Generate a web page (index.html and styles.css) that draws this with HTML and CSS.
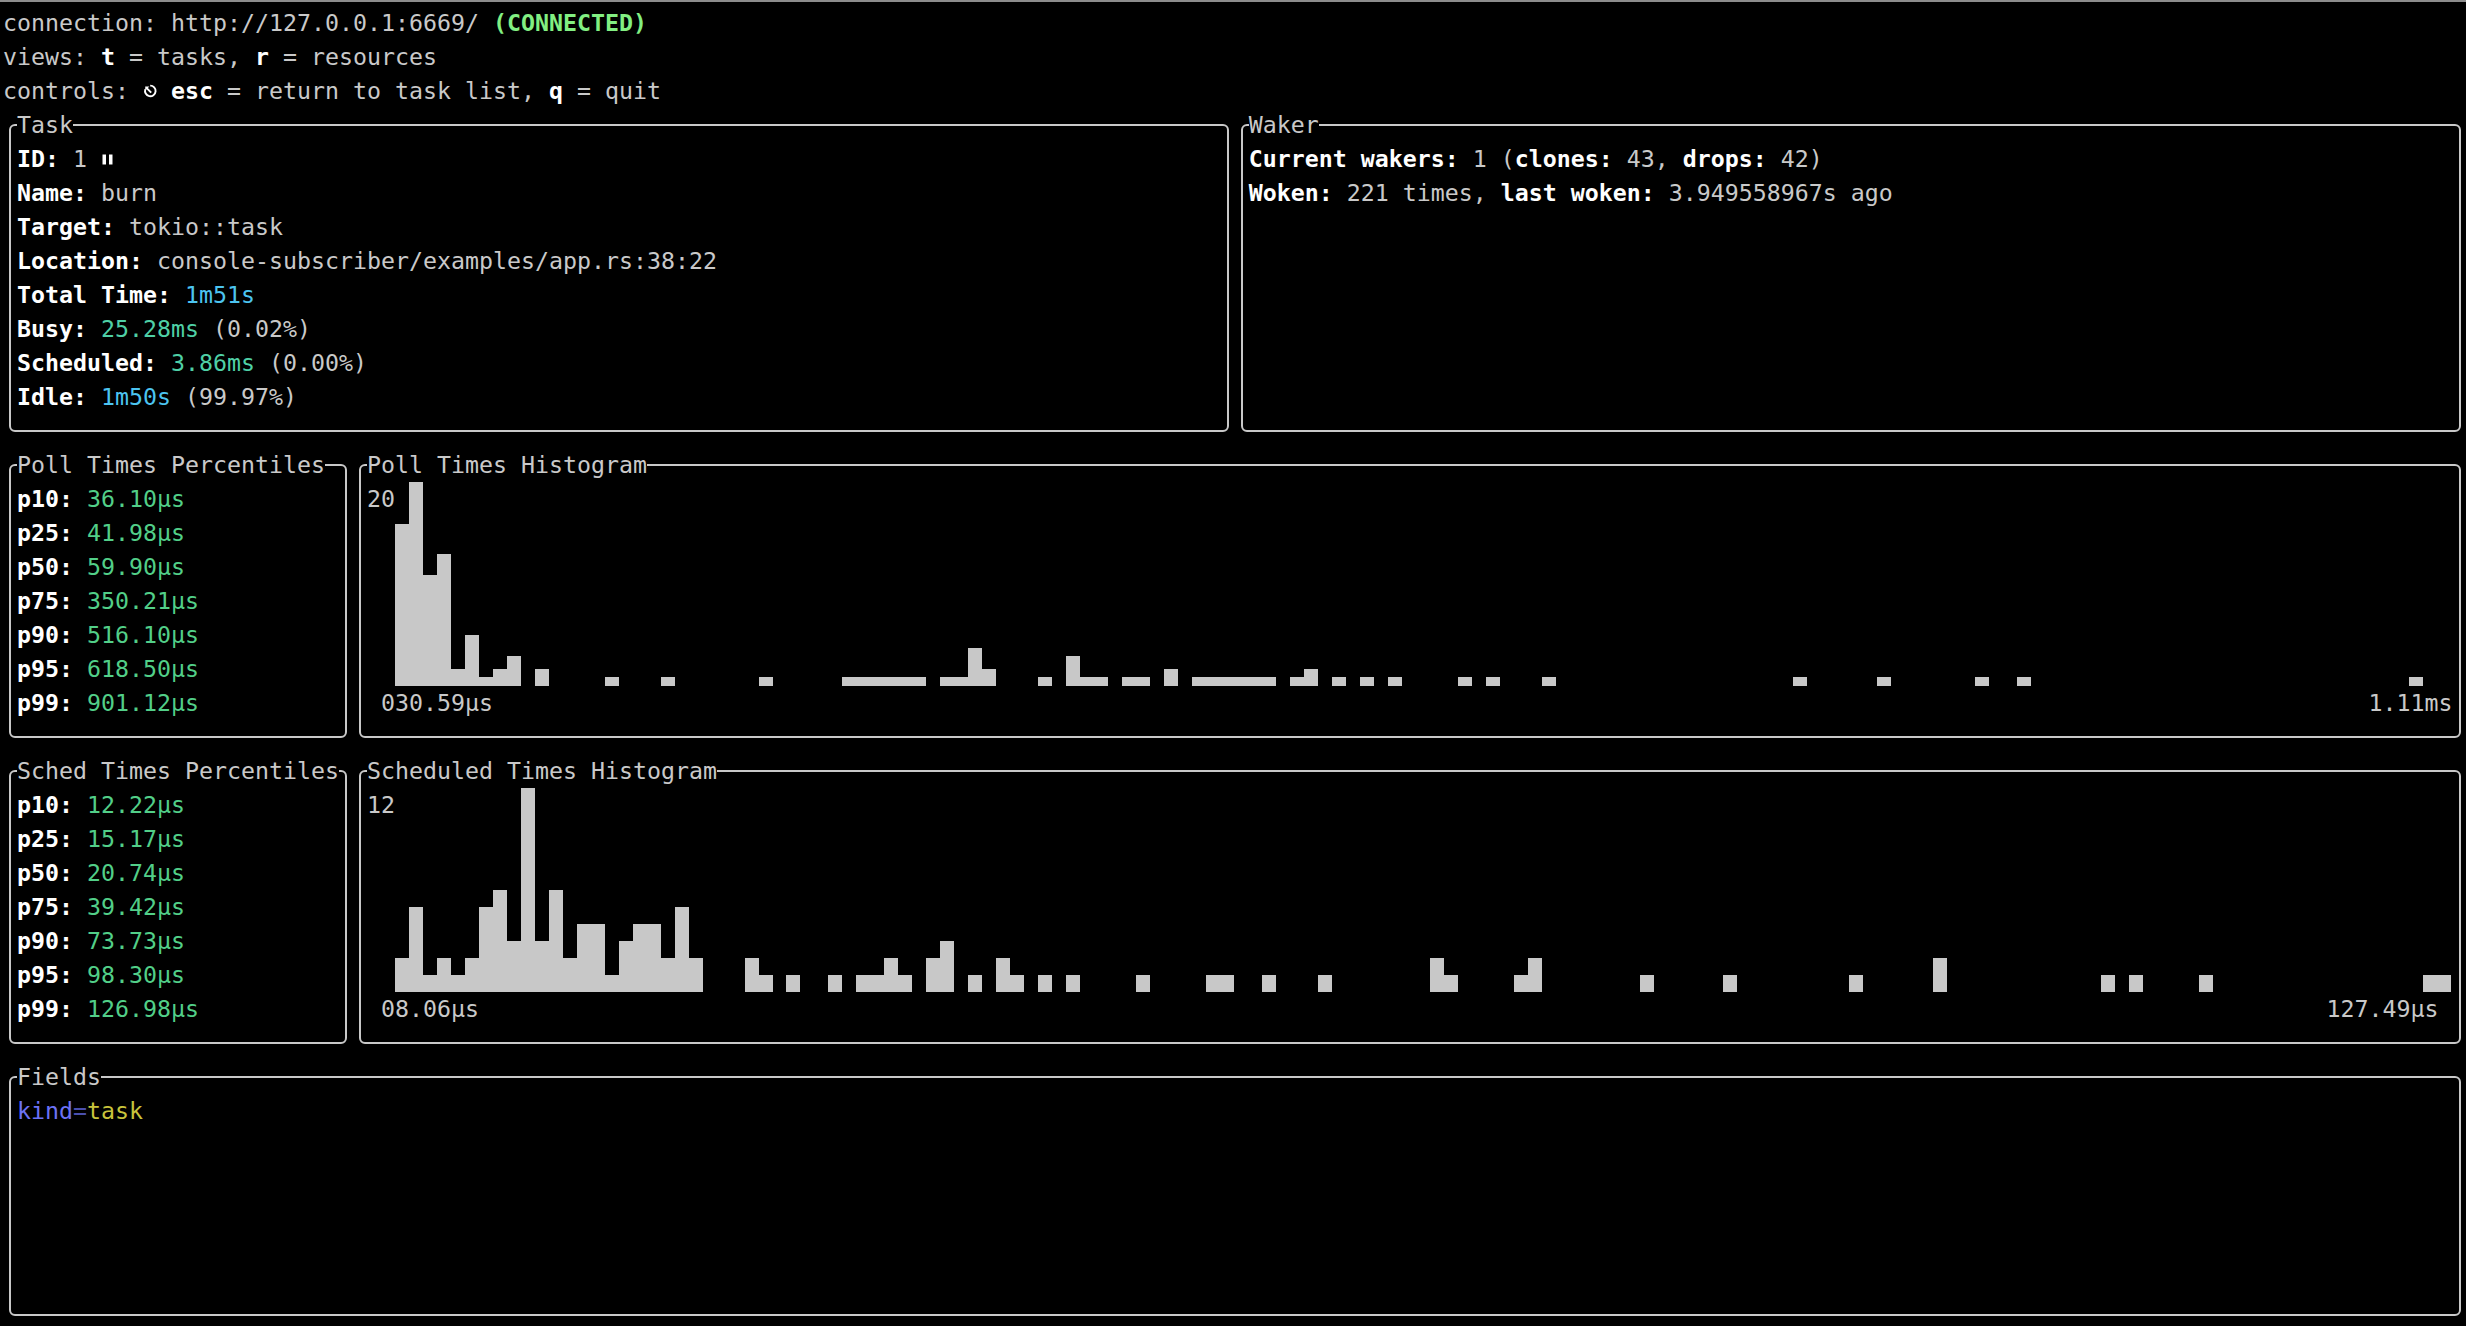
FILE: index.html
```html
<!DOCTYPE html>
<html lang="en">
<head>
<meta charset="utf-8">
<title>tokio-console — task</title>
<link rel="stylesheet" href="styles.css">
</head>
<body>
<div class="term">
  <div class="line">connection: http://127.0.0.1:6669/ <span class="ok">(CONNECTED)</span></div>
  <div class="line">views: <b>t</b> = tasks, <b>r</b> = resources</div>
  <div class="line">controls: <svg class="ico" viewBox="0 0 14 34" aria-label="esc"><path d="M7.2 11.6 A5.3 5.3 0 1 1 2.3 15.2" fill="none" stroke="#fff" stroke-width="1.9"/><path d="M8.2 18.6 L3.2 13.6" stroke="#fff" stroke-width="1.9" fill="none"/><path d="M2.2 12.4 L6.4 12.6 L2.4 16.6 Z" fill="#fff"/></svg> <b>esc</b> = return to task list, <b>q</b> = quit</div>

  <div class="row row-top">
    <fieldset class="panel">
      <legend>Task</legend>
      <div class="line"><b>ID:</b> 1 <svg class="ico" viewBox="0 0 14 34" aria-label="idle"><rect x="1.5" y="12.5" width="3.5" height="10" fill="#fff"/><rect x="8" y="12.5" width="3.5" height="10" fill="#fff"/></svg></div>
      <div class="line"><b>Name:</b> burn</div>
      <div class="line"><b>Target:</b> tokio::task</div>
      <div class="line"><b>Location:</b> console-subscriber/examples/app.rs:38:22</div>
      <div class="line"><b>Total Time:</b> <span class="cyan">1m51s</span></div>
      <div class="line"><b>Busy:</b> <span class="teal">25.28ms</span> (0.02%)</div>
      <div class="line"><b>Scheduled:</b> <span class="teal">3.86ms</span> (0.00%)</div>
      <div class="line"><b>Idle:</b> <span class="cyan">1m50s</span> (99.97%)</div>
    </fieldset>
    <fieldset class="panel">
      <legend>Waker</legend>
      <div class="line"><b>Current wakers:</b> 1 (<b>clones:</b> 43, <b>drops:</b> 42)</div>
      <div class="line"><b>Woken:</b> 221 times, <b>last woken:</b> 3.949558967s ago</div>
    </fieldset>
  </div>

  <div class="row row-mid">
    <fieldset class="panel">
      <legend>Poll Times Percentiles</legend>
      <div class="line"><b>p10:</b> <span class="green">36.10μs</span></div>
      <div class="line"><b>p25:</b> <span class="green">41.98μs</span></div>
      <div class="line"><b>p50:</b> <span class="green">59.90μs</span></div>
      <div class="line"><b>p75:</b> <span class="green">350.21μs</span></div>
      <div class="line"><b>p90:</b> <span class="green">516.10μs</span></div>
      <div class="line"><b>p95:</b> <span class="green">618.50μs</span></div>
      <div class="line"><b>p99:</b> <span class="green">901.12μs</span></div>
    </fieldset>
    <fieldset class="panel">
      <legend>Poll Times Histogram</legend>
      <div class="chart">
        <div class="ymax">20</div>
        <div class="bars" id="poll-bars"></div>
      </div>
      <div class="xaxis"><span> 030.59μs</span><span>1.11ms</span></div>
    </fieldset>
  </div>

  <div class="row row-mid">
    <fieldset class="panel">
      <legend>Sched Times Percentiles</legend>
      <div class="line"><b>p10:</b> <span class="green">12.22μs</span></div>
      <div class="line"><b>p25:</b> <span class="green">15.17μs</span></div>
      <div class="line"><b>p50:</b> <span class="green">20.74μs</span></div>
      <div class="line"><b>p75:</b> <span class="green">39.42μs</span></div>
      <div class="line"><b>p90:</b> <span class="green">73.73μs</span></div>
      <div class="line"><b>p95:</b> <span class="green">98.30μs</span></div>
      <div class="line"><b>p99:</b> <span class="green">126.98μs</span></div>
    </fieldset>
    <fieldset class="panel">
      <legend>Scheduled Times Histogram</legend>
      <div class="chart">
        <div class="ymax">12</div>
        <div class="bars" id="sched-bars"></div>
      </div>
      <div class="xaxis"><span> 08.06μs</span><span>127.49μs </span></div>
    </fieldset>
  </div>

  <div class="row row-fields">
    <fieldset class="panel">
      <legend>Fields</legend>
      <div class="line"><span class="fkey">kind</span><span class="feq">=</span><span class="fval">task</span></div>
    </fieldset>
  </div>
</div>
<script src="script.js"></script>
</body>
</html>
```

FILE: styles.css
```css
html, body {
  margin: 0;
  padding: 0;
  background: #000;
  overflow: hidden;
}

body {
  height: 1326px;
}

.term {
  border-top: 2px solid #8c8c8c;
  padding: 4px 0 0 3px;
  font-family: "DejaVu Sans Mono", "Liberation Mono", monospace;
  font-size: 23.25px;
  line-height: 34px;
  color: #c9c9c9;
}

.line {
  height: 34px;
  white-space: pre;
}

b {
  font-weight: bold;
  color: #ffffff;
}

.ok { color: #82ef82; font-weight: bold; }
.cyan { color: #4cc4f0; }
.teal { color: #4fd0a6; }
.green { color: #52cf88; }
.fkey { color: #6c72f6; }
.feq { color: #4a4fae; }
.fval { color: #c9c43c; }

.ico {
  display: inline-block;
  width: 1ch;
  height: 34px;
  vertical-align: top;
}

.row {
  display: grid;
}

.row-top {
  grid-template-columns: 88ch 88ch;
  grid-template-rows: 340px;
}

.row-mid {
  grid-template-columns: 25ch 151ch;
  grid-template-rows: 306px;
}

.row-fields {
  grid-template-columns: 176ch;
  grid-template-rows: 272px;
}

.panel {
  margin: 0 6px 16px;
  padding: 0 6px 16px;
  border: 2px solid #c8c8c8;
  border-radius: 6px;
  min-width: 0;
  min-inline-size: 0;
}

.panel > legend {
  padding: 0;
  margin: 0;
  height: 34px;
  line-height: 34px;
  white-space: pre;
}

.chart {
  display: flex;
  height: 204px;
}

.ymax {
  width: 2ch;
  flex: none;
  height: 34px;
}

.bars {
  display: flex;
  align-items: flex-end;
  flex: 1;
  height: 204px;
}

.bar {
  flex: none;
  width: 1ch;
  background: #c8c8c8;
}

.xaxis {
  display: flex;
  justify-content: space-between;
  height: 34px;
  white-space: pre;
}
```

FILE: script.js
```javascript
(function () {
  // bar levels in 1/8 of a text row, keyed by terminal column (28..174)
  var poll = {
    28: 38, 29: 48, 30: 26, 31: 31, 32: 4, 33: 12, 34: 2, 35: 4, 36: 7, 38: 4,
    43: 2, 47: 2, 54: 2, 60: 2, 61: 2, 62: 2, 63: 2, 64: 2, 65: 2,
    67: 2, 68: 2, 69: 9, 70: 4, 74: 2, 76: 7, 77: 2, 78: 2, 80: 2, 81: 2, 83: 4,
    85: 2, 86: 2, 87: 2, 88: 2, 89: 2, 90: 2, 92: 2, 93: 4, 95: 2, 97: 2, 99: 2,
    104: 2, 106: 2, 110: 2, 128: 2, 134: 2, 141: 2, 144: 2, 172: 2
  };
  var sched = {
    28: 8, 29: 20, 30: 4, 31: 8, 32: 4, 33: 8, 34: 20, 35: 24, 36: 12, 37: 48,
    38: 12, 39: 24, 40: 8, 41: 16, 42: 16, 43: 4, 44: 12, 45: 16, 46: 16, 47: 8,
    48: 20, 49: 8, 53: 8, 54: 4, 56: 4, 59: 4, 61: 4, 62: 4, 63: 8, 64: 4,
    66: 8, 67: 12, 69: 4, 71: 8, 72: 4, 74: 4, 76: 4, 81: 4, 86: 4, 87: 4,
    90: 4, 94: 4, 102: 8, 103: 4, 108: 4, 109: 8, 117: 4, 123: 4, 132: 4,
    138: 8, 150: 4, 152: 4, 157: 4, 173: 4, 174: 4
  };
  function build(id, data) {
    var el = document.getElementById(id);
    for (var c = 28; c <= 174; c++) {
      var d = document.createElement('div');
      d.className = 'bar';
      var lv = data[c] || 0;
      d.style.height = Math.round(lv * 34 / 8) + 'px';
      el.appendChild(d);
    }
  }
  build('poll-bars', poll);
  build('sched-bars', sched);
})();
```
